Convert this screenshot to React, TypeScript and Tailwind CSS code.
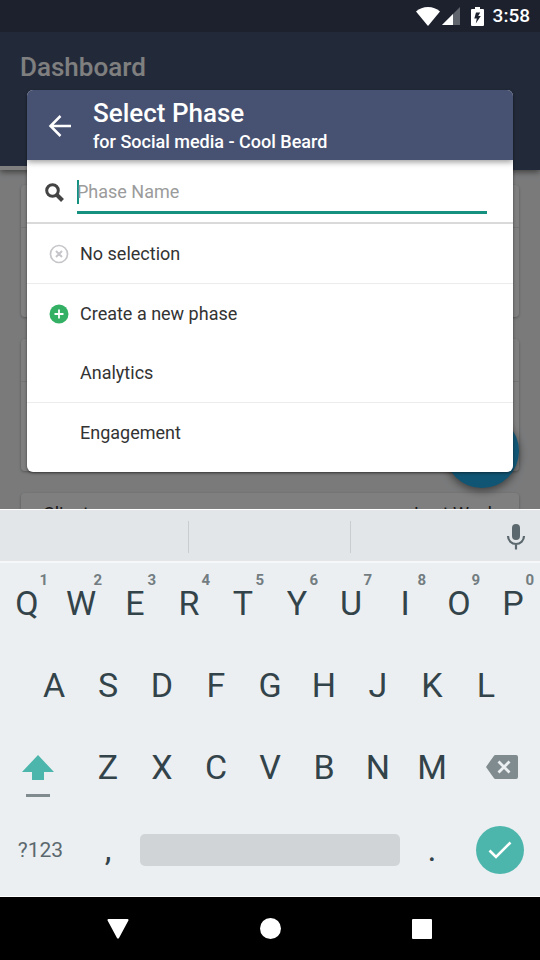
import { useState } from 'react';
import type { ReactNode } from 'react';

const topRow = ['Q', 'W', 'E', 'R', 'T', 'Y', 'U', 'I', 'O', 'P'];
const homeRow = ['A', 'S', 'D', 'F', 'G', 'H', 'J', 'K', 'L'];
const bottomRow = ['Z', 'X', 'C', 'V', 'B', 'N', 'M'];

interface KeyProps {
    label: string;
    hint?: string;
}

function Key({ label, hint }: KeyProps) {
    return (
        <button
            type="button"
            className="relative flex flex-1 items-center justify-center pb-[2px] text-[34px] leading-8 text-[#33434a]"
        >
            {label}
            {hint && (
                <span className="absolute top-[9px] right-[6px] text-[15px] leading-4 font-bold text-[#737d81]">
                    {hint}
                </span>
            )}
        </button>
    );
}

function StatusBar() {
    return (
        <div className="flex h-8 shrink-0 items-center justify-end bg-[#1c212d] pr-[10px] text-white">
            <svg width="24" height="19" viewBox="0 0 24 19" fill="currentColor">
                <path d="M12 19 0 4.4C3.2 1.6 7.4 0 12 0s8.800 1.600 12 4.400z" />
            </svg>
            <svg width="18" height="18" viewBox="0 0 18 18" className="ml-[2px]" fill="currentColor">
                <path d="M0 18 18 0v18z" opacity="0.3" />
                <path d="M0 18 11 7v11z" />
            </svg>
            <svg width="13" height="19" viewBox="0 0 13 19" className="ml-[11px]" fill="currentColor">
                <path
                    fillRule="evenodd"
                    d="M4 0h5v2h3a1 1 0 0 1 1 1v15a1 1 0 0 1-1 1H1a1 1 0 0 1-1-1V3a1 1 0 0 1 1-1h3zM5 5.500 3.300 11.500h2.500l-1 5 5-7.500H7.200L9.200 5.500z"
                />
            </svg>
            <span className="ml-[9px] text-[19px] leading-6 font-medium">3:58</span>
        </div>
    );
}

function DashboardCard({ title, period }: { title: string; period: string }) {
    return (
        <section className="h-[132px] shrink-0 rounded-sm bg-white shadow-[0_1px_3px_rgba(0,0,0,0.3)]">
            <div className="flex h-[43px] items-center justify-between border-b border-[#e8e8e8] px-[22px] text-lg leading-6 text-[#333]">
                <h2>{title}</h2>
                <span>{period}</span>
            </div>
        </section>
    );
}

function Dashboard() {
    return (
        <div className="flex h-full flex-col bg-[#f4f5f7]">
            <header className="flex h-[138px] shrink-0 flex-col justify-between bg-[#455372] shadow-[0_2px_6px_rgba(0,0,0,0.5)]">
                <h1 className="px-5 pt-[19px] text-[26px] leading-8 font-medium text-white">Dashboard</h1>
                <div className="h-1 w-1/2 bg-white" />
            </header>
            <main className="flex flex-col gap-[22px] px-[21px] pt-[15px]">
                <DashboardCard title="" period="" />
                <DashboardCard title="" period="" />
                <DashboardCard title="Clients" period="Last Week" />
            </main>
        </div>
    );
}

interface PhaseOptionProps {
    label: string;
    icon?: ReactNode;
    divider?: boolean;
}

function PhaseOption({ label, icon, divider = false }: PhaseOptionProps) {
    return (
        <li className={divider ? 'border-b border-[#ececec]' : ''}>
            <button
                type="button"
                className="flex h-[59px] w-full items-center pl-[22px] text-left text-lg leading-6 text-[#333]"
            >
                <span className="mr-[11px] flex w-5 justify-center">{icon}</span>
                {label}
            </button>
        </li>
    );
}

function PhaseDialog() {
    const [query, setQuery] = useState('');

    return (
        <div
            role="dialog"
            aria-labelledby="phase-title"
            className="w-full overflow-hidden rounded-md bg-white shadow-[0_1px_3px_rgba(0,0,0,0.5)]"
        >
            <div className="relative flex h-[70px] items-center bg-[#475272] pt-px pl-[21px] text-white shadow-[0_2px_6px_rgba(0,0,0,0.4)]">
                <button type="button" aria-label="Back">
                    <svg width="24" height="24" viewBox="0 0 24 24" fill="none" stroke="currentColor" strokeWidth="2.500">
                        <path d="M23 12H3M12.500 2 2.500 12l10 10" />
                    </svg>
                </button>
                <div className="ml-[21px]">
                    <h2 id="phase-title" className="text-[26px] leading-8 font-medium">
                        Select Phase
                    </h2>
                    <p className="text-lg leading-[26px] font-medium">for Social media - Cool Beard</p>
                </div>
            </div>
            <div className="flex h-16 items-center border-b-2 border-[#d9d9d9] pt-[2px] pr-[26px] pl-[18px]">
                <label htmlFor="phase-name" aria-label="Phase Name" className="mr-[13px] text-[#444]">
                    <svg width="19" height="19" viewBox="0 0 19 19" fill="none" stroke="currentColor">
                        <circle cx="7.500" cy="7.500" r="5.800" strokeWidth="3" />
                        <path d="m12 12 5.500 5.500" strokeWidth="4" />
                    </svg>
                </label>
                <div className="flex h-11 flex-1 items-center border-b-[3px] border-[#16917f] pt-[2px]">
                    <span className="h-6 w-[2px] bg-[#16917f]" />
                    <input
                        id="phase-name"
                        type="text"
                        placeholder="Phase Name"
                        value={query}
                        onChange={(e) => setQuery(e.target.value)}
                        className="-ml-[2px] w-full bg-transparent text-lg leading-6 text-[#333] placeholder:text-[#9b9b9b] focus:outline-none"
                    />
                </div>
            </div>
            <ul className="pb-[10px]">
                <PhaseOption
                    label="No selection"
                    divider
                    icon={
                        <svg width="20" height="20" viewBox="0 0 20 20" fill="none" stroke="#c6c6ca">
                            <circle cx="10" cy="10" r="8.500" strokeWidth="1.700" />
                            <path d="m7 7 6 6M13 7l-6 6" strokeWidth="2" />
                        </svg>
                    }
                />
                <PhaseOption
                    label="Create a new phase"
                    icon={
                        <svg width="20" height="20" viewBox="0 0 20 20" fill="none">
                            <circle cx="10" cy="10" r="9.500" fill="#34b065" />
                            <path d="M5.500 10h9M10 5.500v9" stroke="#fff" strokeWidth="1.800" />
                        </svg>
                    }
                />
                <PhaseOption label="Analytics" divider />
                <PhaseOption label="Engagement" />
            </ul>
        </div>
    );
}

function Keyboard() {
    return (
        <div className="flex shrink-0 flex-col border-y border-white bg-[#ebeff2]">
            <div className="flex h-[53px] items-center border-b-2 border-[#f5f7f8] bg-[#e2e6e9] pt-[2px]">
                <div className="h-8 w-[35%] border-r border-[#c9cdd0]" />
                <div className="h-8 w-[30%] border-r border-[#c9cdd0]" />
                <div className="flex flex-1 justify-end pr-[14px]">
                    <button type="button" aria-label="Voice input" className="text-[#5b686e]">
                        <svg width="20" height="26" viewBox="0 0 20 26" fill="none">
                            <rect x="6" y="0" width="8" height="16" rx="4" fill="currentColor" />
                            <path d="M2 12a8 8 0 0 0 16 0M10 20v5.500" stroke="currentColor" strokeWidth="2.200" />
                        </svg>
                    </button>
                </div>
            </div>
            <div className="flex h-[82px]">
                {topRow.map((letter, index) => (
                    <Key key={letter} label={letter} hint={String((index + 1) % 10)} />
                ))}
            </div>
            <div className="flex h-[82px] px-[5%]">
                {homeRow.map((letter) => (
                    <Key key={letter} label={letter} />
                ))}
            </div>
            <div className="flex h-[82px]">
                <button
                    type="button"
                    aria-label="Shift"
                    className="flex w-[15%] flex-col items-center justify-center gap-[14px] pt-4 pr-[5px]"
                >
                    <svg width="32" height="25" viewBox="0 0 32 25" fill="#4db6ac">
                        <path d="M16 0 32 17H22v8H10v-8H0z" />
                    </svg>
                    <span className="h-[3px] w-6 bg-[#7f8b8f]" />
                </button>
                {bottomRow.map((letter) => (
                    <Key key={letter} label={letter} />
                ))}
                <button type="button" aria-label="Backspace" className="flex w-[15%] items-center justify-center pb-[2px] pl-[5px]">
                    <svg width="32" height="24" viewBox="0 0 32 24">
                        <path
                            d="M9.500 0H30a2 2 0 0 1 2 2v20a2 2 0 0 1-2 2H9.500a2 2 0 0 1-1.700-.9L0 12 7.800.9A2 2 0 0 1 9.500 0z"
                            fill="#7f8b8f"
                        />
                        <path d="m12.500 6.500 11 11M23.500 6.500l-11 11" stroke="#ebeff2" strokeWidth="2.800" />
                    </svg>
                </button>
            </div>
            <div className="mb-[5px] flex h-[82px]">
                <button type="button" className="w-[15%] text-[21px] leading-6 text-[#5b686e]">
                    ?123
                </button>
                <div className="flex w-[10%]">
                    <Key label="," />
                </div>
                <div className="flex w-1/2 items-center px-[5px]">
                    <button type="button" aria-label="Space" className="h-8 w-full rounded-[5px] bg-[#d0d4d7]" />
                </div>
                <div className="flex w-[10%]">
                    <Key label="." />
                </div>
                <div className="flex w-[15%] items-center justify-center">
                    <button
                        type="button"
                        aria-label="Done"
                        className="flex h-12 w-12 items-center justify-center rounded-full bg-[#4db6ac]"
                    >
                        <svg width="24" height="18" viewBox="0 0 24 18" fill="none" stroke="#fff" strokeWidth="2.600">
                            <path d="m1.500 9.500 6.500 6.500L22.500 1.500" />
                        </svg>
                    </button>
                </div>
            </div>
        </div>
    );
}

function NavigationBar() {
    return (
        <nav className="flex h-[63px] shrink-0 bg-black px-[42px] text-white">
            <button type="button" aria-label="Hide keyboard" className="flex flex-1 items-center justify-center">
                <svg width="22" height="20" viewBox="0 0 22 20" fill="currentColor">
                    <path d="M1.500 0h19a1 1 0 0 1 .9 1.500l-9.400 17.400a1.100 1.100 0 0 1-2 0L.6 1.500A1 1 0 0 1 1.500 0z" />
                </svg>
            </button>
            <button type="button" aria-label="Home" className="flex flex-1 items-center justify-center">
                <span className="size-[21px] rounded-full bg-white" />
            </button>
            <button type="button" aria-label="Recent apps" className="flex flex-1 items-center justify-center">
                <span className="size-5 rounded-[1px] bg-white" />
            </button>
        </nav>
    );
}

export default function App() {
    return (
        <div className="flex h-screen flex-col font-[Roboto,sans-serif]">
            <StatusBar />
            <div className="relative min-h-0 flex-1 overflow-hidden">
                <Dashboard />
                <button
                    type="button"
                    aria-label="Add"
                    className="absolute right-[21px] bottom-[21px] size-[74px] rounded-full bg-[#22aae8] shadow-[0_3px_8px_rgba(0,0,0,0.5)]"
                />
                <div className="absolute inset-0 bg-black/50 px-[27px] pt-[58px]">
                    <PhaseDialog />
                </div>
            </div>
            <Keyboard />
            <NavigationBar />
        </div>
    );
}
